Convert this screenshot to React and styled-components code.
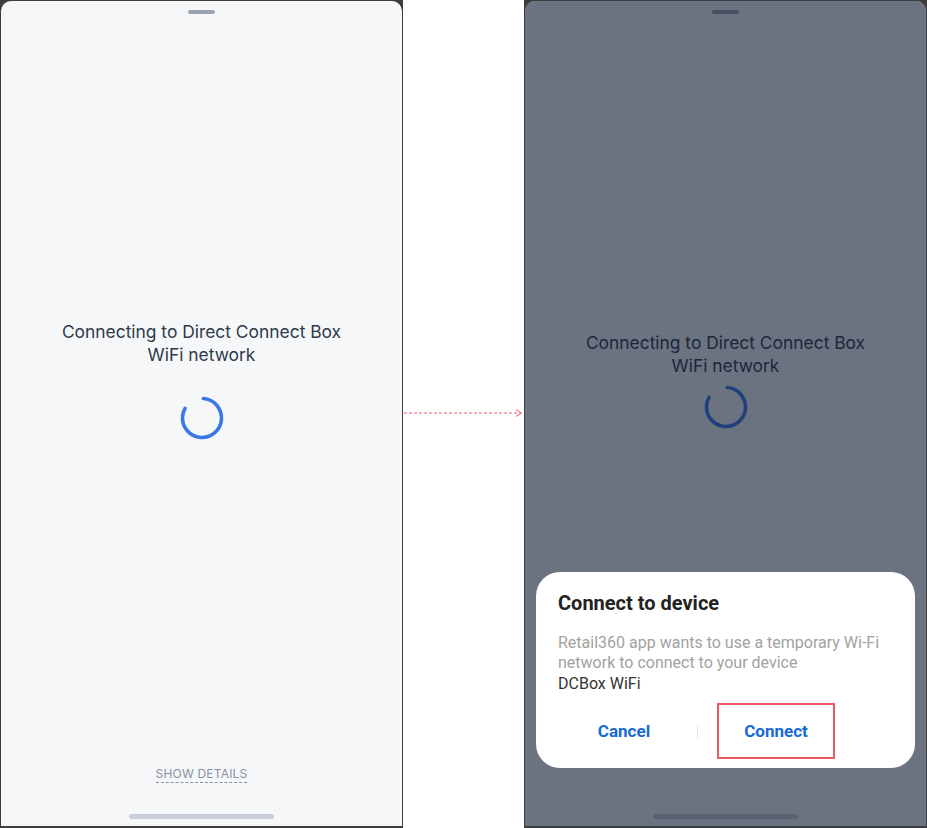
import styled, { createGlobalStyle } from 'styled-components'

const GlobalStyle = createGlobalStyle`
  html, body {
    margin: 0;
    padding: 0;
    background: #ffffff;
  }
  * {
    box-sizing: border-box;
  }
`

export default function App() {
  return (
    <>
      <GlobalStyle />
      <Flow>
        <Phone>
          <Screen>
            <Handle />
            <Main $top={306} $gap={30}>
              <Title>Connecting to Direct Connect Box<br />WiFi network</Title>
              <Spinner />
            </Main>
            <Footer>
              <ShowDetails>Show details</ShowDetails>
              <HomeBar />
            </Footer>
          </Screen>
        </Phone>

        <Connector>
          <svg width="121" height="10" viewBox="0 0 121 10">
            <line x1="1" y1="5" x2="118" y2="5" stroke="#ef5b60" strokeWidth="1" strokeDasharray="3 2" />
            <polyline points="113,1.5 118.5,5 113,8.5" fill="none" stroke="#ef5b60" strokeWidth="1" />
          </svg>
        </Connector>

        <Phone>
          <Screen>
            <Handle />
            <Main $top={317} $gap={8}>
              <Title>Connecting to Direct Connect Box<br />WiFi network</Title>
              <Spinner />
            </Main>
            <Footer>
              <HomeBar />
            </Footer>
            <Scrim />
            <Dialog>
              <DialogTitle>Connect to device</DialogTitle>
              <DialogBody>
                Retail360 app wants to use a temporary Wi-Fi<br />
                network to connect to your device
              </DialogBody>
              <DeviceName>DCBox WiFi</DeviceName>
              <Actions>
                <ActionButton>Cancel</ActionButton>
                <Divider />
                <ActionButton $highlighted>Connect</ActionButton>
              </Actions>
            </Dialog>
          </Screen>
        </Phone>
      </Flow>
    </>
  )
}

function Spinner() {
  return (
    <SpinnerSvg width="44" height="44" viewBox="0 0 44 44">
      <circle
        cx="22"
        cy="22"
        r="19.5"
        fill="none"
        stroke="#3b78e6"
        strokeWidth="3.6"
        strokeLinecap="round"
        strokeDasharray="100 23"
        transform="rotate(-86 22 22)"
      />
    </SpinnerSvg>
  )
}

const Flow = styled.div`
  width: 927px;
  height: 828px;
  display: flex;
  align-items: stretch;
`

const Phone = styled.div`
  width: 403px;
  height: 828px;
  flex-shrink: 0;
  background: #3d3d3f;
  border: 1px solid #3d3d3f;
  border-bottom-width: 2px;
  display: flex;
`

const Screen = styled.div`
  position: relative;
  flex: 1;
  background: #f6f7f9;
  border-radius: 10px 10px 0 0;
  display: flex;
  flex-direction: column;
  align-items: center;
  overflow: hidden;
`

const Handle = styled.div`
  width: 27px;
  height: 4px;
  margin-top: 9px;
  border-radius: 2px;
  background: #9aa3b2;
`

const Main = styled.div`
  display: flex;
  flex-direction: column;
  align-items: center;
  gap: ${p => p.$gap}px;
  padding-top: ${p => p.$top}px;
`

const Title = styled.div`
  font-family: Inter, "Noto Sans", sans-serif;
  font-size: 17.4px;
  line-height: 23px;
  color: #2f3a4b;
  text-align: center;
`

const SpinnerSvg = styled.svg`
  display: block;
`

const Footer = styled.div`
  margin-top: auto;
  display: flex;
  flex-direction: column;
  align-items: center;
  padding-bottom: 7px;
`

const ShowDetails = styled.div`
  font-family: Inter, "Noto Sans", sans-serif;
  font-size: 12px;
  line-height: 16px;
  letter-spacing: 0.2px;
  text-transform: uppercase;
  color: #8592a6;
  border-bottom: 1px dashed #8592a6;
  margin-bottom: 31px;
`

const HomeBar = styled.div`
  width: 145px;
  height: 5px;
  border-radius: 3px;
  background: #c8ced8;
`

const Scrim = styled.div`
  position: absolute;
  inset: 0;
  background: rgba(15, 26, 48, 0.6);
`

const Dialog = styled.div`
  position: absolute;
  left: 11px;
  right: 11px;
  bottom: 58px;
  background: #ffffff;
  border-radius: 24px;
  padding: 18px 22px 9px;
  font-family: Roboto, "Liberation Sans", sans-serif;
`

const DialogTitle = styled.div`
  font-size: 20px;
  line-height: 26px;
  font-weight: 700;
  color: #222222;
`

const DialogBody = styled.div`
  margin-top: 17px;
  font-size: 16px;
  line-height: 19.5px;
  color: #a2a2a2;
`

const DeviceName = styled.div`
  font-size: 16px;
  line-height: 23px;
  color: #333333;
`

const Actions = styled.div`
  display: flex;
  align-items: center;
  margin-top: 8px;
  margin-left: 7px;
`

const ActionButton = styled.div`
  width: 118px;
  height: 56px;
  display: flex;
  align-items: center;
  justify-content: center;
  font-size: 17px;
  font-weight: 700;
  color: #1769d6;
  border: 2px solid ${p => (p.$highlighted ? '#ea5a5e' : 'transparent')};
`

const Divider = styled.div`
  width: 1px;
  height: 13px;
  margin: 0 19px 0 14px;
  background: #e4e4e4;
`

const Connector = styled.div`
  flex: 1;
  padding-top: 404px;
`
